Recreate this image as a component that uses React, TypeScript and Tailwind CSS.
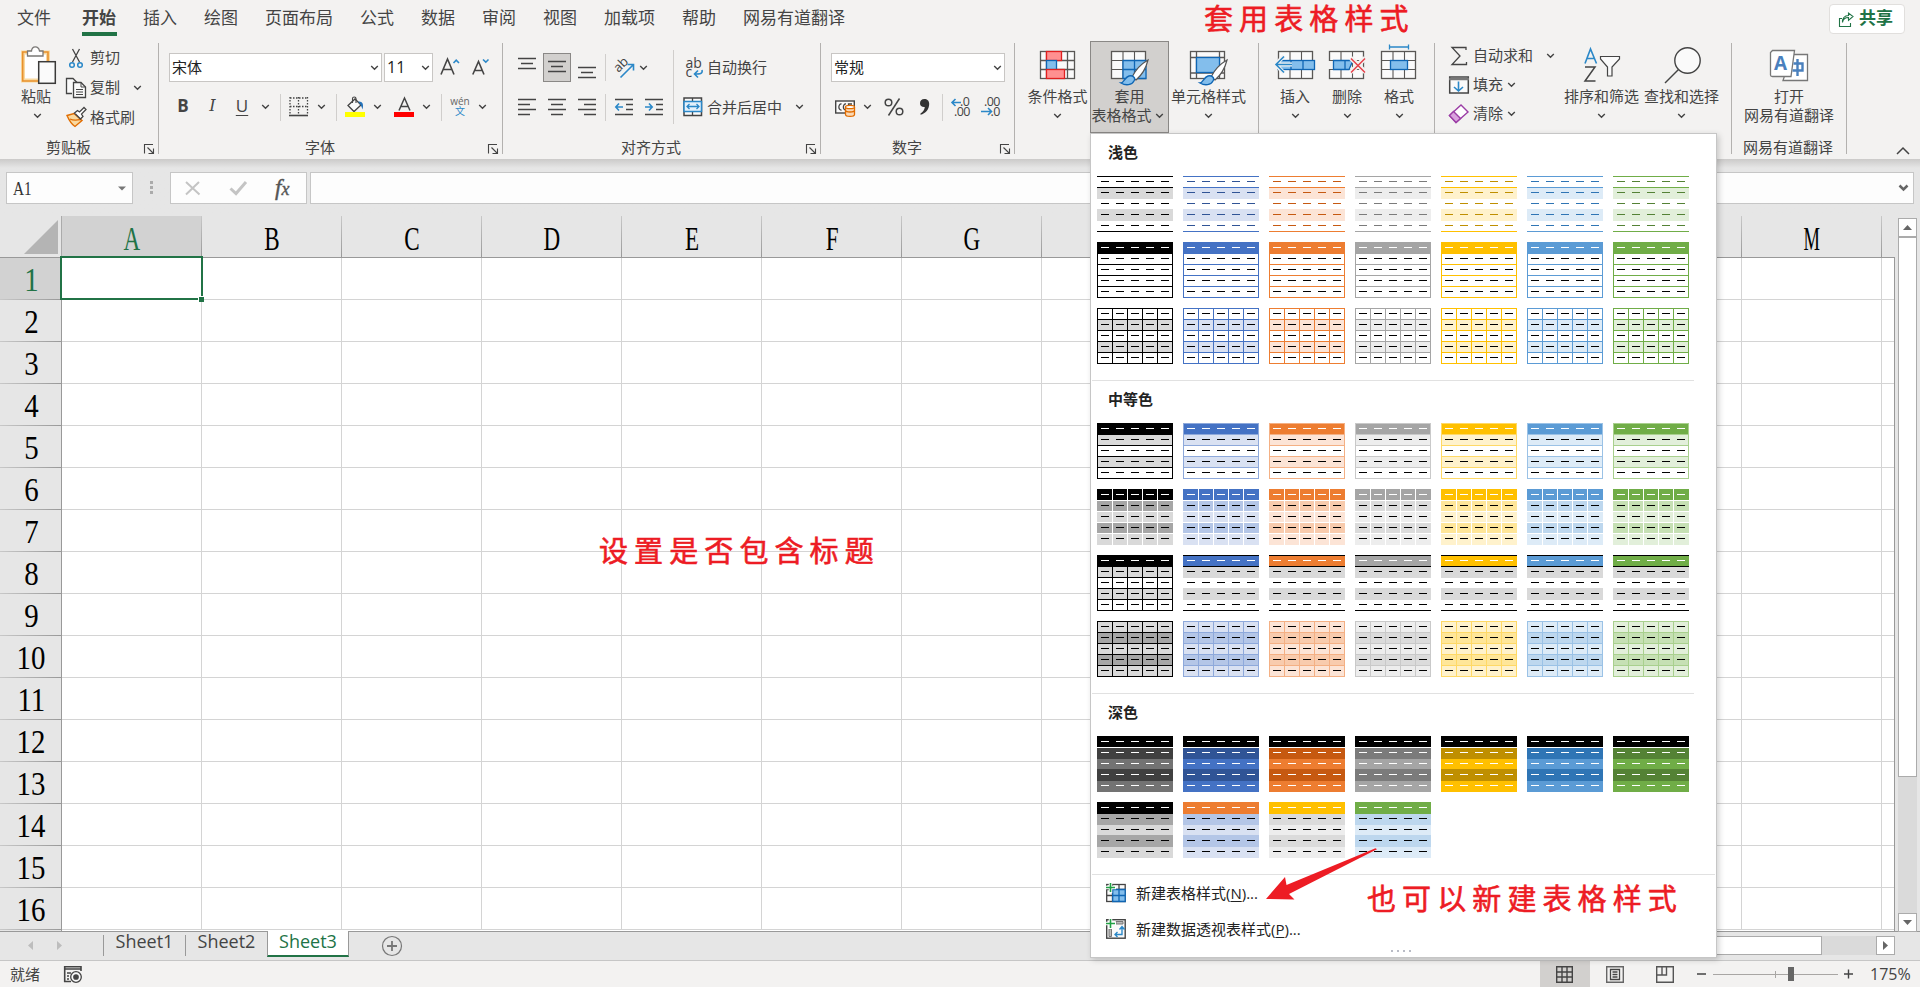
import React from "react";

type Kids = { children?: React.ReactNode };

/* Drawing whose viewBox is "x y w h"; it is shown at its natural size. */
function Pic({ b, className = "", children }: Kids & { b: string; className?: string }) {
  const [, , w, h] = b.split(" ").map(Number);
  return (
    <svg viewBox={b} width={w} height={h} className={`block shrink-0 overflow-visible ${className}`} fill="none" stroke="#444" strokeWidth="1.3">
      {children}
    </svg>
  );
}

function Chev({ className = "" }: { className?: string }) {
  return (
    <span className={`flex w-4 shrink-0 justify-center ${className}`}>
      <svg width="9" height="6" viewBox="0 0 9 6" fill="none" stroke="#444" strokeWidth="1.4" className="block">
        <path d="M1.2 1l3.3 3.3L7.8 1" />
      </svg>
    </span>
  );
}

const Sep = ({ className = "" }: { className?: string }) => <span className={`h-[27px] w-px shrink-0 bg-[#d0cecc] ${className}`} />;
const Txt = ({ children, className = "" }: Kids & { className?: string }) => (
  <span className={`shrink-0 whitespace-nowrap text-[15px] leading-[19px] ${className}`}>{children}</span>
);

function Launcher() {
  return (
    <Pic b="144 144 10 10" className="mr-1 ml-auto">
      <path d="M144.5 153.500V144.500H153M147.500 147.500L153 153M153.500 148.500V153.500H148.500" strokeWidth="1.100" />
    </Pic>
  );
}

function Group({ className, label, labelPad = "", launcher, children }: Kids & { className: string; label?: string; labelPad?: string; launcher?: boolean }) {
  return (
    <div className={`flex h-[111px] shrink-0 flex-col border-r border-[#b3b1af] ${className}`}>
      <div className="flex h-[92px] items-start">{children}</div>
      <div className={`flex h-[19px] items-end ${labelPad}`}>
        {label && <span className="text-[15px] leading-[13px] whitespace-nowrap">{label}</span>}
        {launcher && <Launcher />}
      </div>
    </div>
  );
}

function Big({ className, icon, lines, chev = true }: { className: string; icon: React.ReactNode; lines: string[]; chev?: boolean }) {
  return (
    <div className={`flex shrink-0 flex-col items-center ${className}`}>
      <div className="flex h-11 items-center">{icon}</div>
      <Txt>{lines[0]}</Txt>
      <div className="flex h-[19px] items-center">
        {lines[1] && <Txt>{lines[1]}</Txt>}
        {chev && <Chev />}
      </div>
    </div>
  );
}

const tabs = ["插入", "绘图", "页面布局", "公式", "数据", "审阅", "视图", "加载项", "帮助", "网易有道翻译"];

function TabBar() {
  return (
    <div className="flex h-10 items-start bg-[#f3f2f1] pt-[7px] pl-[17px] text-[17px] leading-[22px] text-[#444]">
      <span className="mr-[31px]">文件</span>
      <span className="mr-[27px] flex h-[29px] w-[35px] justify-between border-b-4 border-[#217346] font-bold">开始</span>
      <div className="-ml-px flex gap-[27px] whitespace-nowrap">
        {tabs.map((t) => (
          <span key={t}>{t}</span>
        ))}
      </div>
      <div className="mt-[-3px] mr-[15px] ml-auto flex h-[30px] w-[76px] items-center rounded border border-[#e1dfdd] bg-white pl-[9px] font-bold text-[#217346]">
        <Pic b="1839 11 15 15">
          <g stroke="#217346" strokeWidth="1.100">
            <path d="M1842 17.500H1839.500V25.500H1850.500V22" />
            <path d="M1842.500 21.500C1843 18 1845.500 16.500 1848.500 16.500V19.300L1853 15.500L1848.500 12V14.500C1844.500 14.500 1842 17.500 1842.500 21.500Z" />
          </g>
        </Pic>
        <span className="-mt-0.5 ml-[5px] whitespace-nowrap">共享</span>
      </div>
    </div>
  );
}

function TableGrid({ x, y, w = 34, h = 27 }: { x: number; y: number; w?: number; h?: number }) {
  return (
    <g stroke="#595755">
      <rect x={x} y={y} width={w} height={h} fill="#fafafa" />
      <path d={`M${x} ${y + 9}h${w}M${x} ${y + 18}h${w}M${x + 11.500} ${y}v${h}M${x + 23} ${y}v${h}`} strokeWidth="1.100" />
    </g>
  );
}

function Brush({ x, y }: { x: number; y: number }) {
  return (
    <g transform={`translate(${x} ${y})`}>
      <path d="M27 0C20 4 14 11 11 17L15 20C21 15 25 8 27 0Z" fill="#fff" stroke="#555" strokeWidth="1.200" />
      <path d="M0 23C3 23 4 17 8 16C12 15 15 18 13 21C11 25 5 26 0 23Z" fill="#83beec" stroke="#0f66b4" strokeWidth="1.300" />
    </g>
  );
}

function Clipboard() {
  return (
    <Group className="w-[159px]" label="剪贴板" labelPad="pl-[46px]" launcher>
      <div className="flex w-[45px] flex-col items-center pl-[29px]">
        <div className="flex h-11 items-center pl-1">
          <Pic b="21 46 36 40">
            <rect x="23" y="53.500" width="25" height="28" fill="#fff" stroke="#f9d9a0" strokeWidth="4" />
            <path d="M39 82H22.700V53H48V62" stroke="#e8912d" strokeWidth="1.600" />
            <path d="M27.500 57V52H31.500C32 46.500 38.500 46.500 39.500 52H43V57Z" fill="#fff" stroke="#7a7876" />
            <rect x="38.700" y="62.700" width="16.600" height="21.600" fill="#fafafa" stroke="#3b3a39" strokeWidth="1.500" />
          </Pic>
        </div>
        <Txt className="-ml-0.5">粘贴</Txt>
        <Chev className="mt-[7px]" />
      </div>
      <div className="flex flex-col pl-[21px]">
        <div className="flex h-[29px] items-center">
          <Pic b="66 47 20 20">
            <path d="M72.500 48L79.500 61M79.500 48L72.500 61" strokeWidth="1.300" />
            <circle cx="72" cy="64" r="2.300" stroke="#2b88c8" strokeWidth="1.500" />
            <circle cx="80" cy="64" r="2.300" stroke="#2b88c8" strokeWidth="1.500" />
          </Pic>
          <Txt className="ml-1">剪切</Txt>
        </div>
        <div className="flex h-[31px] items-center">
          <Pic b="66 77 20 20">
            <path d="M72 92.500H66.500V77.500H73L77 81.500" fill="#fafafa" />
            <path d="M73.500 81.500H81L85.500 86V96.500H73.500Z" fill="#fafafa" />
            <path d="M81 81.500V86H85.500M76 88.500H83M76 91H83M76 93.500H83" strokeWidth="1" />
          </Pic>
          <Txt className="ml-1">复制</Txt>
          <Chev className="ml-[9px]" />
        </div>
        <div className="flex h-[28px] items-center">
          <Pic b="66 106 20 20">
            <path d="M67 114.500L74 112.500L82 119.500L75 125.500C71 123 69 119 67 114.500Z" fill="#f9d9a0" stroke="#e06c00" strokeWidth="1.400" />
            <path d="M70 118C74 120 78 119 81 118.500" stroke="#e06c00" />
            <path d="M74.500 112L77.500 109.500L79.500 111L84 106.500L86 108.500L81.500 113L83 115.500L80.500 118Z" fill="#fff" />
          </Pic>
          <Txt className="ml-1">格式刷</Txt>
        </div>
      </div>
    </Group>
  );
}

function FontGroup() {
  return (
    <Group className="w-[344px]" label="字体" labelPad="pl-[146px]" launcher>
      <div className="flex flex-col pl-[10px]">
        <div className="mt-[10px] flex h-[29px] items-center">
          <div className="flex h-[29px] w-[213px] items-center border border-[#c8c6c4] bg-white pl-0.5 text-[#222]">
            <Txt>宋体</Txt>
            <Chev className="mr-[-1px] ml-auto" />
          </div>
          <div className="ml-0.5 flex h-[29px] w-[49px] items-center border border-[#c8c6c4] bg-white pl-[2px] text-[#222]">
            <Txt className="text-[16px]">11</Txt>
            <Chev className="mr-[-1px] ml-auto" />
          </div>
          <Pic b="440 56 22 22" className="ml-[7px]">
            <path d="M441 73.500L447.500 58L454 73.500M443.300 68.500H451.800" strokeWidth="1.600" />
            <path d="M453.500 62L456.200 59.200L459 62" stroke="#2b88c8" strokeWidth="1.600" />
          </Pic>
          <Pic b="471 56 22 22" className="ml-[9px]">
            <path d="M472.800 73.500L478.500 60.500L484 73.500M474.800 69.500H482.200" strokeWidth="1.600" />
            <path d="M483 58.500L485.800 61.200L488.500 58.500" stroke="#2b88c8" strokeWidth="1.600" />
          </Pic>
        </div>
        <div className="mt-[10px] flex h-[30px] items-center text-[17px] leading-[22px]">
          <span className="-mt-[3px] w-7 text-center font-bold">B</span>
          <span className="-mt-[3px] w-[31px] text-center font-['DejaVu_Serif','Liberation_Serif',serif] text-[16px] italic">I</span>
          <span className="-mt-[3px] w-7 text-center underline underline-offset-[3px]">U</span>
          <Chev className="ml-px" />
          <Sep className="ml-[7px]" />
          <Pic b="289 97 20 20" className="ml-2">
            <path d="M290 98H308M290 106.500H308M290 97V114M298.500 97V114M307.500 97V114" strokeDasharray="1.500 1.500" />
            <path d="M289 115.500H308" strokeWidth="1.600" />
          </Pic>
          <Chev className="ml-1" />
          <Sep className="ml-[7px]" />
          <Pic b="345 96 20 22" className="ml-2">
            <path d="M348 105.500L355 99L361 105L354 111.500Z" fill="#fafafa" />
            <path d="M352.500 103V98.500C352.500 96.500 356 96.500 356 98.500V103" strokeWidth="1.100" />
            <path d="M358 101.500C362.500 101 364 104 362.500 109.500C361.500 106 360.500 104.500 358 101.500Z" fill="#2372b9" stroke="none" />
            <rect x="345" y="112" width="20" height="5" fill="#ff0" stroke="none" />
          </Pic>
          <Chev className="ml-1" />
          <Pic b="394 96 20 22" className="ml-[9px]">
            <path d="M399 110.500L404.500 98L410 110.500M401 106.500H408" strokeWidth="1.500" />
            <rect x="394" y="112" width="20" height="5" fill="#f00" stroke="none" />
          </Pic>
          <Chev className="ml-1" />
          <Sep className="ml-[7px]" />
          <div className="ml-2 flex w-5 flex-col items-center">
            <span className="text-[10px] leading-[9px] text-[#666]">wén</span>
            <span className="text-[10px] leading-[11px] text-[#2b88c8]">文</span>
          </div>
          <Chev className="ml-1" />
        </div>
      </div>
    </Group>
  );
}

function Lines({ b, spans, className }: { b: string; spans: [number, number, number][]; className?: string }) {
  return (
    <Pic b={b} className={className}>
      {spans.map(([x, y, w]) => (
        <path key={y} d={`M${x} ${y}h${w}`} strokeWidth="1.500" />
      ))}
    </Pic>
  );
}

function AlignGroup() {
  return (
    <Group className="w-[318px]" label="对齐方式" labelPad="pl-[118px]" launcher>
      <div className="flex w-[170px] flex-col">
        <div className="mt-[10px] flex h-[29px] items-center">
          <Lines b="0 0 18 28" className="ml-[15px]" spans={[[0, 4.5, 18], [3, 9.5, 12], [0, 14.5, 18]]} />
          <div className="ml-[7px] flex h-[29px] w-7 justify-center border border-[#8a8886] bg-[#d2d0ce]">
            <Lines b="0 0 18 28" spans={[[0, 7.5, 18], [3, 12.5, 12], [0, 17.5, 18]]} />
          </div>
          <Lines b="0 0 18 28" className="ml-[7px]" spans={[[0, 13.5, 18], [3, 18.5, 12], [0, 23.5, 18]]} />
          <Sep className="ml-[9px]" />
          <Pic b="613 55 22 22" className="ml-[7px]">
            <text x="0" y="0" transform="translate(618.500 71) rotate(-45)" fontSize="13" fill="#444" stroke="none">ab</text>
            <path d="M620.500 75.500L633 63M627.500 62.500H633.500V68.500" stroke="#2b88c8" strokeWidth="1.600" />
          </Pic>
          <Chev />
        </div>
        <div className="mt-[10px] flex h-[30px] items-center">
          <Lines b="0 0 18 18" className="ml-[15px]" spans={[[0, 1.5, 18], [0, 6.5, 12], [0, 11.5, 18], [0, 16.5, 12]]} />
          <Lines b="0 0 18 18" className="ml-3" spans={[[0, 1.5, 18], [3, 6.5, 12], [0, 11.5, 18], [3, 16.5, 12]]} />
          <Lines b="0 0 18 18" className="ml-3" spans={[[0, 1.5, 18], [6, 6.5, 12], [0, 11.5, 18], [6, 16.5, 12]]} />
          <Sep className="ml-[9px]" />
          <Pic b="0 0 18 18" className="ml-[9px]">
            <path d="M0 1.500H18M11 6.500H18M11 11.500H18M0 16.500H18" strokeWidth="1.500" />
            <path d="M8 9H1M4 5.500L.8 9L4 12.500" stroke="#2b88c8" strokeWidth="1.600" />
          </Pic>
          <Pic b="0 0 18 18" className="ml-3">
            <path d="M0 1.500H18M11 6.500H18M11 11.500H18M0 16.500H18" strokeWidth="1.500" />
            <path d="M0 9H7M4 5.500L7.200 9L4 12.500" stroke="#2b88c8" strokeWidth="1.600" />
          </Pic>
        </div>
      </div>
      <span className="mt-[7px] h-[74px] w-px bg-[#d0cecc]" />
      <div className="flex flex-col">
        <div className="mt-[10px] flex h-[29px] items-center">
          <Pic b="685 56 19 22" className="ml-[11px]">
            <text x="685.500" y="66.500" fontSize="14" fill="#444" stroke="none">ab</text>
            <text x="685.500" y="76" fontSize="14" fill="#444" stroke="none">c</text>
            <path d="M702 69C703 73 700 73 694.500 73M698 69.500L694.500 73L698 76.500" stroke="#2b88c8" strokeWidth="1.600" />
          </Pic>
          <Txt className="ml-[3px]">自动换行</Txt>
        </div>
        <div className="mt-[10px] flex h-[30px] items-center">
          <Pic b="683 97 20 20" className="ml-[9px]">
            <rect x="684" y="98" width="17.500" height="17.500" fill="#fafafa" strokeWidth="1.500" />
            <path d="M692.500 98V101M692.500 112V116" />
            <rect x="684" y="101.500" width="17.500" height="10" fill="#e5f1fb" stroke="#2b88c8" strokeWidth="1.500" />
            <path d="M687 106.500H699M689.500 104L687 106.500L689.500 109M696.500 104L699 106.500L696.500 109" stroke="#2b88c8" />
          </Pic>
          <Txt className="ml-1">合并后居中</Txt>
          <Chev className="ml-[9px]" />
        </div>
      </div>
    </Group>
  );
}

function NumberGroup() {
  return (
    <Group className="w-[194px]" label="数字" labelPad="pl-[71px]" launcher>
      <div className="flex flex-col">
        <div className="mt-[10px] ml-[10px] flex h-[29px] w-[174px] items-center border border-[#c8c6c4] bg-white pl-0.5 text-[#222]">
          <Txt>常规</Txt>
          <Chev className="mr-[-1px] ml-auto" />
        </div>
        <div className="mt-[10px] flex h-[30px] items-center">
          <Pic b="835 97 20 20" className="ml-[14px]">
            <rect x="835.700" y="101" width="18.600" height="12" fill="#fafafa" strokeWidth="1.400" />
            <path d="M841.500 104C838 103.500 838 110.500 841.500 110M846 104C842.500 103.500 842.500 110.500 846 110M848.500 105V104H852" />
            <path d="M845.500 107V114.500C845.500 117 854.500 117 854.500 114.500V107" fill="#fbd9b5" stroke="#e06c00" />
            <ellipse cx="850" cy="107" rx="4.500" ry="1.700" fill="#fff" stroke="#e06c00" />
            <path d="M845.500 110.500C846 112.500 854 112.500 854.500 110.500" stroke="#e06c00" />
          </Pic>
          <Chev className="ml-1" />
          <Pic b="884 97 20 20" className="ml-[9px]">
            <circle cx="888.500" cy="102.500" r="3.300" strokeWidth="1.500" />
            <circle cx="899.500" cy="111.500" r="3.300" strokeWidth="1.500" />
            <path d="M899.500 98.500L888.500 115.500" strokeWidth="1.500" />
          </Pic>
          <Pic b="918 97 14 20" className="ml-[14px]">
            <path d="M924.500 99C921.500 99 920 101 920 103.200C920 106 922 107.300 924.800 107C924.500 110 923 112 920.500 113.500V114.800C925.500 113.500 929.200 109.500 929.200 103.800C929.200 100.500 927 99 924.500 99Z" fill="#333" stroke="none" />
          </Pic>
          <Sep className="ml-[10px]" />
          <Pic b="950 96 22 22" className="ml-[7px]">
            <g fill="#444" stroke="none" fontSize="12.500">
              <text x="960" y="106" textLength="10">.0</text>
              <text x="954" y="116" textLength="16.500">.00</text>
            </g>
            <path d="M961 102.500H952M955.500 99L952 102.500L955.500 106" stroke="#2b88c8" strokeWidth="1.600" />
          </Pic>
          <Pic b="980 96 22 22" className="ml-2">
            <g fill="#444" stroke="none" fontSize="12.500">
              <text x="984" y="106" textLength="16.500">.00</text>
              <text x="990.500" y="116" textLength="10">.0</text>
            </g>
            <path d="M981 111.500H991M988 108L991.500 111.500L988 115" stroke="#2b88c8" strokeWidth="1.600" />
          </Pic>
        </div>
      </div>
    </Group>
  );
}

function StyleGroup() {
  return (
    <Group className="w-[244px]">
      <Big
        className="ml-[10px] w-[65px]"
        lines={["条件格式"]}
        icon={
          <Pic b="1039 43 38 44">
            <g stroke="#595755">
              <rect x="1040.500" y="51.500" width="34" height="27" fill="#fafafa" />
              <path d="M1040 60.500H1075M1040 69.500H1075M1046.500 51V79M1067.500 51V79" />
            </g>
            <rect x="1046.500" y="51.500" width="15" height="9" fill="#ff9090" stroke="#e02020" />
            <rect x="1046.500" y="60.500" width="10" height="9" fill="#83beec" stroke="#0f66b4" />
            <rect x="1046.500" y="69.500" width="18" height="9" fill="#ff9090" stroke="#e02020" />
          </Pic>
        }
      />
      <Big
        className="-mt-0.5 h-[92px] w-[79px] border border-[#8a8886] bg-[#d2d0ce] pt-px"
        lines={["套用", "表格格式"]}
        icon={
          <Pic b="1109 43 42 44">
            <TableGrid x={1111.5} y={51.5} />
            <path d="M1123 60.500H1146V78.500H1123ZM1123 69.500H1146M1134.500 60V79" fill="#83beec" stroke="#0f66b4" />
            <Brush x={1121} y={60} />
          </Pic>
        }
      />
      <Big
        className="w-[79px]"
        lines={["单元格样式"]}
        icon={
          <Pic b="1189 43 42 44">
            <g stroke="#595755">
              <rect x="1191.500" y="51.500" width="34" height="27" fill="#fafafa" />
              <path d="M1191 57.500H1226M1191 73H1226M1197.500 51V79M1220.500 51V79" />
            </g>
            <rect x="1197.500" y="57.500" width="23" height="15" fill="#83beec" stroke="#0f66b4" />
            <Brush x={1201} y={60} />
          </Pic>
        }
      />
    </Group>
  );
}

function CellsGroup() {
  return (
    <Group className="w-[176px]">
      <Big
        className="ml-[10px] w-[52px]"
        lines={["插入"]}
        icon={
          <Pic b="1274 43 42 44">
            <TableGrid x={1278.5} y={51.5} />
            <rect x="1278" y="60.500" width="36.500" height="9" fill="#83beec" stroke="#0f66b4" />
            <path d="M1291 60.500V69.500M1303 60.500V69.500" stroke="#0f66b4" />
            <path d="M1292 64.500H1276M1284 56L1275.500 64.500L1284 73" stroke="#f3f2f1" strokeWidth="4" />
            <path d="M1292 64.500H1276M1284 56.500L1276 64.500L1284 72.500" stroke="#2b88c8" strokeWidth="1.600" />
          </Pic>
        }
      />
      <Big
        className="w-[52px]"
        lines={["删除"]}
        icon={
          <Pic b="1327 43 42 44">
            <TableGrid x={1330.5} y={51.5} />
            <rect x="1329" y="61" width="6" height="8" fill="#f3f2f1" stroke="none" />
            <path d="M1334.500 60.500H1354L1350 69.500H1334.500ZM1346 60.500V69.500" fill="#83beec" stroke="#0f66b4" />
            <path d="M1352 58L1366 72M1366 58L1352 72" stroke="#f3f2f1" strokeWidth="5" />
            <path d="M1352 58.500L1366 72.500M1366 58.500L1352 72.500" stroke="#e8414a" strokeWidth="1.500" />
          </Pic>
        }
      />
      <Big
        className="w-[52px]"
        lines={["格式"]}
        icon={
          <Pic b="1378 43 42 44">
            <TableGrid x={1381.5} y={51.5} />
            <rect x="1390.500" y="60.500" width="17" height="9" fill="#83beec" stroke="#0f66b4" />
            <path d="M1389.500 47H1408.500M1389.500 44.500V49.500M1408.500 44.500V49.500" stroke="#2b88c8" />
          </Pic>
        }
      />
    </Group>
  );
}

function EditGroup() {
  return (
    <Group className="w-[297px]">
      <div className="mt-[-2px] flex w-[128px] flex-col pl-[14px]">
        <div className="flex h-[29px] items-center">
          <Pic b="1449 45 20 20">
            <path d="M1466 49V46.500H1452L1460 55L1452 63.500H1466.500V61" />
          </Pic>
          <Txt className="ml-1">自动求和</Txt>
          <Chev className="ml-[9px]" />
        </div>
        <div className="flex h-[29px] items-center">
          <Pic b="1449 74 20 20">
            <rect x="1449.700" y="76" width="18.600" height="16" fill="#fafafa" strokeWidth="1.500" />
            <path d="M1449 78H1469" stroke="#777" strokeWidth="2.500" />
            <path d="M1458.500 80.500V90M1454 86L1458.500 90L1463 86" stroke="#2b88c8" strokeWidth="1.600" />
          </Pic>
          <Txt className="ml-1">填充</Txt>
          <Chev />
        </div>
        <div className="flex h-[29px] items-center">
          <Pic b="1449 103 20 20">
            <path d="M1449.500 114.500L1461 104L1468 111L1456 121.500Z" fill="#fff" stroke="#9b3da5" strokeWidth="1.400" />
            <path d="M1449.500 114.500L1453.500 110.500L1460.500 117.500L1456 121.500Z" fill="#d9a2de" stroke="#9b3da5" strokeWidth="1.400" />
          </Pic>
          <Txt className="ml-1">清除</Txt>
          <Chev />
        </div>
      </div>
      <Big
        className="w-[77px]"
        lines={["排序和筛选"]}
        icon={
          <Pic b="1583 43 38 44">
            <path d="M1585 63.500L1590.500 49L1596.500 63.500M1587 58.500H1594.500" stroke="#2b88c8" strokeWidth="1.600" />
            <path d="M1585 67H1595L1585 81H1595.500" strokeWidth="1.500" />
            <path d="M1600.500 56.500H1619.500V59L1612 67V76H1607.500V67L1600.500 59Z" fill="#fafafa" strokeWidth="1.200" />
          </Pic>
        }
      />
      <Big
        className="ml-[3px] w-[77px]"
        lines={["查找和选择"]}
        icon={
          <Pic b="1662 43 38 44">
            <circle cx="1686.500" cy="60.500" r="12.700" fill="#fafafa" strokeWidth="1.400" />
            <path d="M1677.500 69.500L1664 83" strokeWidth="1.500" />
          </Pic>
        }
      />
    </Group>
  );
}

function TranslateGroup() {
  return (
    <Group className="w-[115px]" label="网易有道翻译" labelPad="pl-[11px]">
      <Big
        className="w-[114px]"
        chev={false}
        lines={["打开", "网易有道翻译"]}
        icon={
          <Pic b="1769 43 40 44">
            <path d="M1794 54.500H1807.500V80.500H1783L1784.500 76" fill="#fff" stroke="#777" />
            <path d="M1772.500 50.500H1794.500L1791 76.500H1772.500C1770.500 76.500 1770.500 75 1770.500 75V52.500Z" fill="#fff" stroke="#777" />
            <text x="1774" y="70" fontSize="19" fontWeight="700" fill="#4a80bd" stroke="none" textLength="13" lengthAdjust="spacingAndGlyphs">A</text>
            <path d="M1793.500 63.500H1802.500V70.500H1792.500M1797.500 59V76" stroke="#4a80bd" strokeWidth="2.400" />
          </Pic>
        }
      />
    </Group>
  );
}

function Ribbon() {
  return (
    <div className="flex h-[119px] bg-[#f3f2f1] pt-[3px] text-[#444]">
      <Clipboard />
      <FontGroup />
      <AlignGroup />
      <NumberGroup />
      <StyleGroup />
      <CellsGroup />
      <EditGroup />
      <TranslateGroup />
      <Pic b="1896 146 14 10" className="mt-[103px] ml-[49px]">
        <path d="M1897 154L1903 148L1909 154" strokeWidth="1.500" />
      </Pic>
    </div>
  );
}

function FormulaBar() {
  return (
    <div className="flex h-[57px] bg-linear-to-b from-[#cbcac9] to-[#e6e6e6] to-[9px] pt-[13px] pl-[6px]">
      <div className="flex h-8 w-[127px] items-center border border-[#c6c6c6] bg-[#fdfdfd] pl-[6px]">
        <span className="mt-0.5 origin-left scale-x-[.85] font-['Liberation_Serif',serif] text-[18px] leading-[20px] text-[#333]">A1</span>
        <Pic b="0 0 8 5" className="mr-[6px] ml-auto">
          <path d="M0 .5H8L4 4.500Z" fill="#777" stroke="none" />
        </Pic>
      </div>
      <Pic b="0 0 4 32" className="ml-[17px]">
        <path d="M1.500 9V12M1.500 14V17M1.500 19V22" stroke="#ababab" strokeWidth="3" />
      </Pic>
      <div className="ml-4 flex h-8 w-[137px] items-center border border-[#c6c6c6] bg-[#fdfdfd]">
        <Pic b="184 180 18 16" className="ml-[13px]">
          <path d="M186 182L199.500 194.500M199 182L186 194.500" stroke="#c4c4c4" strokeWidth="2" />
        </Pic>
        <Pic b="229 180 18 16" className="ml-[27px]">
          <path d="M230.500 188.500L236 193.500L246 182" stroke="#c4c4c4" strokeWidth="3" />
        </Pic>
        <span className="ml-[28px] font-['Liberation_Serif',serif] text-[23px] leading-[24px] text-[#555] italic [-webkit-text-stroke:0.4px_#555]">
          f<span className="text-[18px]">x</span>
        </span>
      </div>
      <div className="ml-[3px] flex h-8 w-[1604px] items-center justify-end border border-[#c6c6c6] bg-[#fdfdfd] pr-[4px]">
        <Pic b="0 0 11 8">
          <path d="M1.500 1.500L5.500 5.500L9.500 1.500" stroke="#666" strokeWidth="2.500" />
        </Pic>
      </div>
    </div>
  );
}

const cols = "ABCDEFGHIJKLM".split("");
const rows = Array.from({ length: 16 }, (_, i) => i + 1);

function Sheet() {
  return (
    <div className="relative flex h-[715px] bg-[#e6e6e6]">
      <div className="flex w-[1894px] flex-col overflow-hidden font-['Liberation_Serif',serif] text-black">
        <div className="flex h-[42px] shrink-0 border-b border-[#999]">
          <div className="flex w-[61px] shrink-0 items-end justify-end pr-[3px] pb-[3px]">
            <Pic b="0 0 34 34">
              <path d="M34 0V34H0Z" fill="#b4b4b4" stroke="none" />
            </Pic>
          </div>
          <span className="w-px shrink-0 bg-[#ababab]" />
          {cols.map((c) => (
            <div key={c} className={`flex w-[140px] shrink-0 ${c === "A" ? "bg-[#d2d2d2] text-[#217346]" : ""}`}>
              <span className="flex grow items-center justify-center pt-[4px] pl-px text-[33px] leading-[36px]">
                <span className={c === "M" ? "scale-x-[.56]" : "scale-x-[.7]"}>{c}</span>
              </span>
              <span className="w-px bg-linear-to-b from-[#c8c8c8] to-[#999]" />
            </div>
          ))}
        </div>
        {rows.map((r) => (
          <div key={r} className="flex h-[42px] shrink-0">
            <div className={`flex w-[61px] shrink-0 flex-col ${r === 1 ? "bg-[#d2d2d2] text-[#217346]" : ""}`}>
              <span className="flex grow items-center justify-center pt-[2px] pl-px text-[34px] leading-[34px]">
                <span className="scale-x-[.85]">{r}</span>
              </span>
              <span className="h-px bg-linear-to-r from-[#c8c8c8] to-[#999]" />
            </div>
            <span className="w-px shrink-0 bg-[#999]" />
            <div className="flex grow border-b border-[#d4d4d4] bg-white">
              {cols.map((c) => (
                <span key={c} className="w-[140px] shrink-0 border-r border-[#d4d4d4]" />
              ))}
            </div>
          </div>
        ))}
        <div className="flex grow">
          <span className="w-[62px] border-r border-[#999]" />
          <span className="grow bg-white" />
        </div>
      </div>
      <span className="mt-[41px] w-px bg-[#999]" />
      <div className="mt-[2px] ml-[3px] flex w-[19px] flex-col">
        <div className="flex h-[19px] items-center justify-center border border-[#ababab] bg-white">
          <Pic b="0 0 9 5"><path d="M0 5H9L4.500 0Z" fill="#666" stroke="none" /></Pic>
        </div>
        <div className="h-[540px] border border-[#ababab] bg-white" />
        <div className="grow bg-[#dadada]" />
        <div className="mb-[-1px] flex h-[19px] items-center justify-center border border-[#ababab] bg-white">
          <Pic b="0 0 9 5"><path d="M0 0H9L4.500 5Z" fill="#666" stroke="none" /></Pic>
        </div>
      </div>
      <div className="absolute top-[40px] left-[60px] h-[44px] w-[143px] border-2 border-[#217346]" />
      <div className="absolute top-[80px] left-[198px] h-[6px] w-[6px] border-t border-l border-white bg-[#217346]" />
    </div>
  );
}

function SheetTabs() {
  return (
    <div className="flex h-[29px] bg-[#e6e6e6] text-[18px] leading-[18px] text-[#444]">
      <div className="flex w-[267px] border-t border-[#999]">
        <Pic b="28 932 36 28" className="ml-[28px]">
          <path d="M33 941V950L28 945.500ZM57 941V950L62 945.500Z" fill="#bdbdbd" stroke="none" />
        </Pic>
        <span className="mt-[3px] ml-[39px] h-[21px] w-px bg-[#999]" />
        <span className="w-[81px] text-center">Sheet1</span>
        <span className="mt-[3px] h-[21px] w-px bg-[#999]" />
        <span className="w-[81px] text-center">Sheet2</span>
      </div>
      <div className="h-[26px] w-[82px] border-x border-b-2 border-x-[#999] border-b-[#217346] bg-white pt-px text-center text-[#217346]">Sheet3</div>
      <div className="flex grow border-t border-[#999]">
        <Pic b="381 935 22 22" className="mt-[3px] ml-[32px]">
          <circle cx="392" cy="946" r="9.500" stroke="#777" strokeWidth="1.200" />
          <path d="M387 946H397M392 941V951" stroke="#777" strokeWidth="1.800" />
        </Pic>
        <div className="mt-[4px] mr-[25px] ml-auto flex h-[19px] w-[805px] bg-[#dadada]">
          <div className="w-[732px] border border-[#ababab] bg-white" />
          <div className="ml-auto flex w-[19px] items-center justify-center border border-[#ababab] bg-white">
            <Pic b="0 0 5 9"><path d="M0 0V9L5 4.500Z" fill="#666" stroke="none" /></Pic>
          </div>
        </div>
      </div>
    </div>
  );
}

function StatusBar() {
  return (
    <div className="flex h-[27px] items-center border-t border-[#c6c6c6] bg-[#f3f2f1] text-[#444]">
      <Txt className="ml-[10px]">就绪</Txt>
      <Pic b="64 965 20 19" className="ml-6">
        <path d="M64.700 982V966.700H81V971M64 969H81" strokeWidth="1.600" />
        <path d="M64 981.500H71M67 973H71M67 976H69M67 979H69" />
        <circle cx="76" cy="977" r="5.300" fill="#fafafa" />
        <circle cx="76" cy="977" r="2.200" fill="#444" />
      </Pic>
      <div className="ml-auto flex h-[26px] w-[50px] items-center justify-center bg-[#d2d0ce]">
        <Pic b="0 0 17 17" className="-ml-0.5">
          <path d="M.7 .7H16.300V16.300H.7ZM1 6H16M1 11H16M6 1V16M11 1V16" strokeWidth="1.400" />
        </Pic>
      </div>
      <div className="flex w-[50px] justify-center">
        <Pic b="0 0 18 17">
          <path d="M.7 .7H17.300V16.300H.7Z" stroke="#666" strokeWidth="1.400" />
          <path d="M4.500 3.500H13.500V13.500H4.500ZM6.500 6H11.500M6.500 8.500H11.500M6.500 11H11.500" strokeWidth="1.300" />
        </Pic>
      </div>
      <div className="flex w-[50px] justify-center">
        <Pic b="0 0 18 17">
          <path d="M.7 .7H17.300V16.300H.7ZM.7 9H10.500V.7M6 .7V9" stroke="#555" strokeWidth="1.400" />
        </Pic>
      </div>
      <Pic b="1697 962 160 25" className="ml-[7px]">
        <path d="M1697 974H1706M1844 974H1853M1848.500 969.500V978.500" strokeWidth="1.400" />
        <path d="M1713 974.500H1838M1775.500 971V978" stroke="#a8a6a4" strokeWidth="1" />
        <rect x="1788" y="967" width="6" height="14" fill="#666" stroke="none" />
      </Pic>
      <span className="mr-[10px] ml-[13px] w-[40px] text-right text-[16px] leading-[20px]">175%</span>
    </div>
  );
}

type Tone = { base: string; light: string; mid: string; edge: string; dark: string };
const tones: Tone[] = [
  { base: "#000000", light: "#d9d9d9", mid: "#a6a6a6", edge: "#000000", dark: "#000000" },
  { base: "#4472c4", light: "#d9e1f2", mid: "#b4c6e7", edge: "#8ea9db", dark: "#305496" },
  { base: "#ed7d31", light: "#fce4d6", mid: "#f8cbad", edge: "#f4b084", dark: "#c65911" },
  { base: "#a5a5a5", light: "#ededed", mid: "#dbdbdb", edge: "#c9c9c9", dark: "#7b7b7b" },
  { base: "#ffc000", light: "#fff2cc", mid: "#ffe699", edge: "#ffd966", dark: "#bf8f00" },
  { base: "#5b9bd5", light: "#ddebf7", mid: "#bdd7ee", edge: "#9bc2e6", dark: "#2f75b5" },
  { base: "#70ad47", light: "#e2efda", mid: "#c6e0b4", edge: "#a9d08e", dark: "#548235" },
];

type Look = {
  fills: [string, string, string];
  head: string;
  body: string;
  lines?: string;
  rules?: number[];
  frame?: boolean;
  columns?: "all" | "body";
};

const bandTop = [0, 12, 23, 33, 45, 56];

/* Table style thumbnail: five rows by five columns on a 76 x 56 canvas. */
function Swatch({ fills, head, body, lines, rules = [], frame, columns }: Look) {
  const bands = [fills[0], fills[1], fills[2], fills[1], fills[2]];
  const from = columns === "body" ? 12 : 0;
  return (
    <svg width="76" height="56" viewBox="0 0 76 56" shapeRendering="crispEdges" className="block">
      {bands.map((f, i) => (
        <rect key={i} x="0" y={bandTop[i]} width="76" height={bandTop[i + 1] - bandTop[i]} fill={f} />
      ))}
      {rules.map((y) => (
        <rect key={y} x="0" y={y} width="76" height="1" fill={lines} />
      ))}
      {columns && [15, 30, 45, 60].map((x) => <rect key={x} x={x} y={from} width="1" height={56 - from} fill={lines} />)}
      {frame && <rect x="0.5" y="0.5" width="75" height="55" fill="none" stroke={lines} />}
      {[0, 1, 2, 3, 4].map((r) => (
        <path key={r} d={`M4 ${r * 11 + 5.5}h8m7 0h8m7 0h8m7 0h8m7 0h8`} stroke={r ? body : head} />
      ))}
    </svg>
  );
}

const W = "#ffffff";
const K = "#000000";
const inner = [11, 22, 33, 44];

const lightLooks: Look[] = [
  ...tones.map((t) => ({ fills: [W, t.light, W], head: t.dark, body: t.dark, lines: t.base, rules: [0, 11, 55] }) as Look),
  ...tones.map((t) => ({ fills: [t.base, W, W], head: W, body: K, lines: t.base, rules: inner, frame: true }) as Look),
  ...tones.map((t) => ({ fills: [W, t.light, W], head: K, body: K, lines: t.base, rules: inner, frame: true, columns: "all" }) as Look),
];
const mediumLooks: Look[] = [
  ...tones.map((t) => ({ fills: [t.base, t.light, W], head: W, body: K, lines: t.edge, rules: inner, frame: true }) as Look),
  ...tones.map((t) => ({ fills: [t.base, t.mid, t.light], head: W, body: K, lines: W, rules: inner, columns: "all" }) as Look),
  ...tones.map((t, i) =>
    i === 0
      ? ({ fills: [K, "#d9d9d9", W], head: W, body: K, lines: K, rules: inner, frame: true, columns: "body" } as Look)
      : ({ fills: [t.base, "#d9d9d9", W], head: W, body: K, lines: K, rules: [0, 11, 55] } as Look),
  ),
  ...tones.map((t) => ({ fills: [t.light, t.mid, t.light], head: K, body: K, lines: t.edge, rules: inner, frame: true, columns: "all" }) as Look),
];
const darkLooks: Look[] = [
  ...tones.map((t, i) => ({ fills: [K, i ? t.dark : "#404040", i ? t.base : "#737373"], head: W, body: W, lines: W, rules: [11] }) as Look),
  { fills: [K, "#a6a6a6", "#d9d9d9"], head: W, body: K },
  { fills: ["#ed7d31", "#b4c6e7", "#d9e1f2"], head: W, body: K },
  { fills: ["#ffc000", "#dbdbdb", "#ededed"], head: W, body: K },
  { fills: ["#70ad47", "#bdd7ee", "#ddebf7"], head: W, body: K },
];

function Section({ title, looks }: { title: string; looks: Look[] }) {
  return (
    <>
      <div className="h-[42px] pt-[8px] pl-[17px] text-[15px] leading-[20px] font-bold">{title}</div>
      <div className="grid w-fit grid-cols-7 gap-[10px] pl-[6px]">
        {looks.map((l, i) => (
          <Swatch key={i} {...l} />
        ))}
      </div>
    </>
  );
}

function StyleMenu() {
  return (
    <div className="absolute top-[133px] left-[1090px] flex h-[825px] w-[627px] flex-col border border-[#c6c6c6] bg-white text-[#222] shadow-[2px_2px_6px_rgba(0,0,0,0.18)]">
      <Section title="浅色" looks={lightLooks} />
      <div className="mt-4 ml-px h-px w-[602px] shrink-0 bg-[#e1e1e1]" />
      <Section title="中等色" looks={mediumLooks} />
      <div className="mt-4 ml-px h-px w-[602px] shrink-0 bg-[#e1e1e1]" />
      <Section title="深色" looks={darkLooks} />
      <div className="mt-4 ml-px h-px w-[623px] shrink-0 bg-[#e1e1e1]" />
      <div className="flex h-9 items-center pl-[15px]">
        <Pic b="1106 882 20 20">
          <rect x="1106.700" y="883.500" width="18.500" height="17" fill="#fafafa" />
          <path d="M1107 888.500H1125M1107 894.500H1125M1112.500 884V901M1119 884V888" />
          <path d="M1112.700 888.500H1125.200V900.500H1112.700ZM1112.500 894.500H1125M1119 888V901" fill="#83beec" stroke="#0f66b4" />
          <path d="M1105 886.500H1116M1110.500 881V892" stroke="#fff" strokeWidth="3.500" />
          <path d="M1106 886.500H1115M1110.500 882V891" stroke="#21a045" strokeWidth="1.600" />
        </Pic>
        <Txt className="ml-[10px]">新建表格样式(<u className="underline-offset-2">N</u>)...</Txt>
      </div>
      <div className="flex h-9 items-center pl-[15px]">
        <Pic b="1106 918 20 20">
          <rect x="1106.700" y="918.700" width="18.500" height="18.500" fill="#fafafa" strokeWidth="1.400" />
          <path d="M1116 920.500H1123V923H1116ZM1109 928H1111.500V935.500H1109Z" fill="#bbb" stroke="#777" strokeWidth="1" />
          <path d="M1122 926V933.500H1115M1119.500 928.500L1122 925.500L1124.500 928.500M1117.500 931L1115 933.500L1117.500 936" stroke="#2b88c8" strokeWidth="1.400" />
          <path d="M1105 922.500H1116M1110.500 917V928" stroke="#fff" strokeWidth="3.500" />
          <path d="M1106 922.500H1115M1110.500 918V927" stroke="#21a045" strokeWidth="1.600" />
        </Pic>
        <Txt className="ml-[10px]">新建数据透视表样式(<u className="underline-offset-2">P</u>)...</Txt>
      </div>
      <Pic b="0 0 20 2" className="mt-[3px] ml-[300px]">
        <path d="M0 1H2M6 1H8M12 1H14M18 1H20" stroke="#b9bcc6" strokeWidth="2" />
      </Pic>
    </div>
  );
}

function Note({ className, children }: Kids & { className: string }) {
  return (
    <div className={`absolute font-['KaiTi','STKaiti','Noto_Sans_CJK_SC',sans-serif] text-[29px] leading-[34px] tracking-[6.1px] whitespace-nowrap text-[#ed1c24] [-webkit-text-stroke:0.6px_#ed1c24] ${className}`}>
      {children}
    </div>
  );
}

export default function App() {
  return (
    <div className="relative flex h-[987px] w-[1920px] flex-col overflow-hidden bg-[#e6e6e6] font-['Open_Sans','Noto_Sans_CJK_SC',sans-serif]">
      <TabBar />
      <Ribbon />
      <FormulaBar />
      <Sheet />
      <SheetTabs />
      <StatusBar />
      <StyleMenu />
      <Note className="top-0 left-[1204px]">套用表格样式</Note>
      <Note className="top-[532px] left-[599px]">设置是否包含标题</Note>
      <Note className="top-[880px] left-[1367px]">也可以新建表格样式</Note>
      <div className="absolute top-[846px] left-[1264px]">
        <Pic b="1264 846 116 56">
          <path d="M1266 899L1285 877L1286.500 885L1375.500 848.300L1377 849.300L1289 894L1294.500 899.500Z" fill="#ed1c24" stroke="none" />
        </Pic>
      </div>
    </div>
  );
}
